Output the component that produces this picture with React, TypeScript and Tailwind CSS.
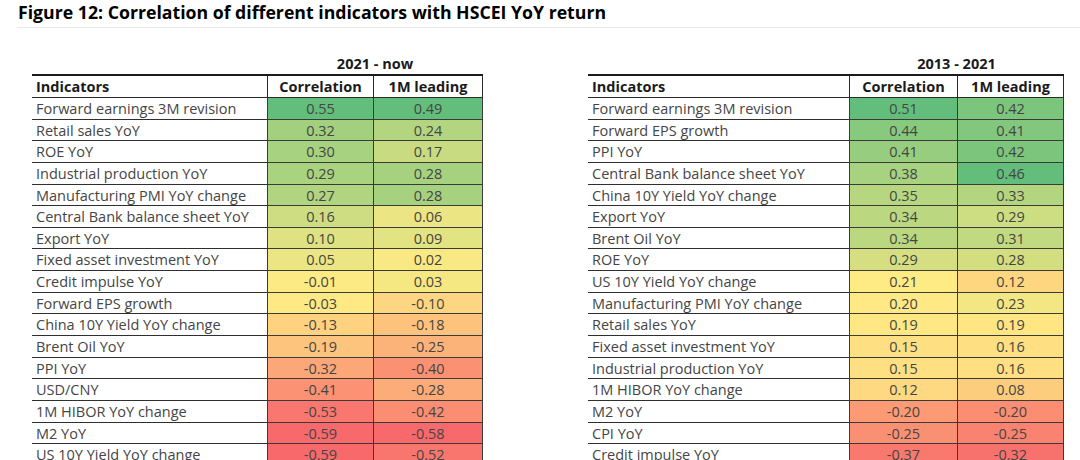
type Row = [string, number, number];

const left: Row[] = [
  ['Forward earnings 3M revision', 0.55, 0.49],
  ['Retail sales YoY', 0.32, 0.24],
  ['ROE YoY', 0.3, 0.17],
  ['Industrial production YoY', 0.29, 0.28],
  ['Manufacturing PMI YoY change', 0.27, 0.28],
  ['Central Bank balance sheet YoY', 0.16, 0.06],
  ['Export YoY', 0.1, 0.09],
  ['Fixed asset investment YoY', 0.05, 0.02],
  ['Credit impulse YoY', -0.01, 0.03],
  ['Forward EPS growth', -0.03, -0.1],
  ['China 10Y Yield YoY change', -0.13, -0.18],
  ['Brent Oil YoY', -0.19, -0.25],
  ['PPI YoY', -0.32, -0.4],
  ['USD/CNY', -0.41, -0.28],
  ['1M HIBOR YoY change', -0.53, -0.42],
  ['M2 YoY', -0.59, -0.58],
  ['US 10Y Yield YoY change', -0.59, -0.52],
];

const right: Row[] = [
  ['Forward earnings 3M revision', 0.51, 0.42],
  ['Forward EPS growth', 0.44, 0.41],
  ['PPI YoY', 0.41, 0.42],
  ['Central Bank balance sheet YoY', 0.38, 0.46],
  ['China 10Y Yield YoY change', 0.35, 0.33],
  ['Export YoY', 0.34, 0.29],
  ['Brent Oil YoY', 0.34, 0.31],
  ['ROE YoY', 0.29, 0.28],
  ['US 10Y Yield YoY change', 0.21, 0.12],
  ['Manufacturing PMI YoY change', 0.2, 0.23],
  ['Retail sales YoY', 0.19, 0.19],
  ['Fixed asset investment YoY', 0.15, 0.16],
  ['Industrial production YoY', 0.15, 0.16],
  ['1M HIBOR YoY change', 0.12, 0.08],
  ['M2 YoY', -0.2, -0.2],
  ['CPI YoY', -0.25, -0.25],
  ['Credit impulse YoY', -0.37, -0.32],
];

// Excel-style 3 colour scale: red -> yellow -> green
type Scale = { min: number; mid: number; max: number };
const GREEN = [99, 190, 123];
const YELLOW = [255, 235, 132];
const RED = [248, 105, 107];

function heat(v: number, s: Scale) {
  let to = GREEN;
  let t = 0;
  if (v >= s.mid) {
    t = (v - s.mid) / (s.max - s.mid);
  } else {
    to = RED;
    t = (s.mid - v) / (s.mid - s.min);
  }
  t = Math.max(0, Math.min(1, t));
  const c = YELLOW.map((f, i) => Math.round(f + (to[i] - f) * t));
  return `rgb(${c[0]}, ${c[1]}, ${c[2]})`;
}

function Table({
  period,
  rows,
  labelWidth,
  colWidths,
  scales,
}: {
  period: string;
  rows: Row[];
  labelWidth: string;
  colWidths: [string, string];
  scales: [Scale, Scale];
}) {
  return (
    <div className="flex flex-col">
      <div className="flex h-[20px] items-center">
        <div className={labelWidth} />
        <div className="flex-1 text-center text-[14.5px] font-bold leading-none text-[#1a1a1a]">{period}</div>
      </div>
      <div className="border-t-2 border-[#1c1c1c]">
        <div className="flex h-[22px] border-b border-[#2a2a2a] text-[14.5px] font-bold text-[#1a1a1a]">
          <div className={`${labelWidth} pl-[4px] leading-[21px]`}>Indicators</div>
          <div className={`${colWidths[0]} border-l border-[#2a2a2a] text-center leading-[21px]`}>Correlation</div>
          <div className={`${colWidths[1]} border-x border-[#2a2a2a] text-center leading-[21px]`}>1M leading</div>
        </div>
        {rows.map(([name, a, b]) => (
          <div key={name} className="flex h-[21.65px] text-[14.5px] text-[#454545]">
            <div className={`${labelWidth} border-b border-[#2f2f2f] pl-[4px] leading-[21px] whitespace-nowrap`}>
              {name}
            </div>
            <div
              className={`${colWidths[0]} border-b border-l border-[#3a3a3a] text-center leading-[21px]`}
              style={{ backgroundColor: heat(a, scales[0]) }}
            >
              {a.toFixed(2)}
            </div>
            <div
              className={`${colWidths[1]} border-x border-b border-[#3a3a3a] text-center leading-[21px]`}
              style={{ backgroundColor: heat(b, scales[1]) }}
            >
              {b.toFixed(2)}
            </div>
          </div>
        ))}
      </div>
    </div>
  );
}

export default function App() {
  return (
    <div className="h-[460px] w-[1080px] overflow-hidden bg-white font-['Open_Sans','Liberation_Sans',sans-serif]">
      <div className="ml-[17px] h-[28px] border-b border-[#e8e8e8] pl-[1px]">
        <h1 className="text-[17.7px] font-bold leading-[24px] text-black">
          Figure 12: Correlation of different indicators with HSCEI YoY return
        </h1>
      </div>
      <div className="flex pt-[26px]">
        <div className="ml-[32px] w-[451px]">
          <Table
            period="2021 - now"
            rows={left}
            labelWidth="w-[235px]"
            colWidths={['w-[106px]', 'w-[110px]']}
            scales={[
              { min: -0.59, mid: -0.02, max: 0.55 },
              { min: -0.58, mid: 0.0, max: 0.49 },
            ]}
          />
        </div>
        <div className="ml-[105px] w-[476px]">
          <Table
            period="2013 - 2021"
            rows={right}
            labelWidth="w-[261px]"
            colWidths={['w-[108px]', 'w-[107px]']}
            scales={[
              { min: -0.45, mid: 0.21, max: 0.51 },
              { min: -0.36, mid: 0.21, max: 0.46 },
            ]}
          />
        </div>
      </div>
    </div>
  );
}
